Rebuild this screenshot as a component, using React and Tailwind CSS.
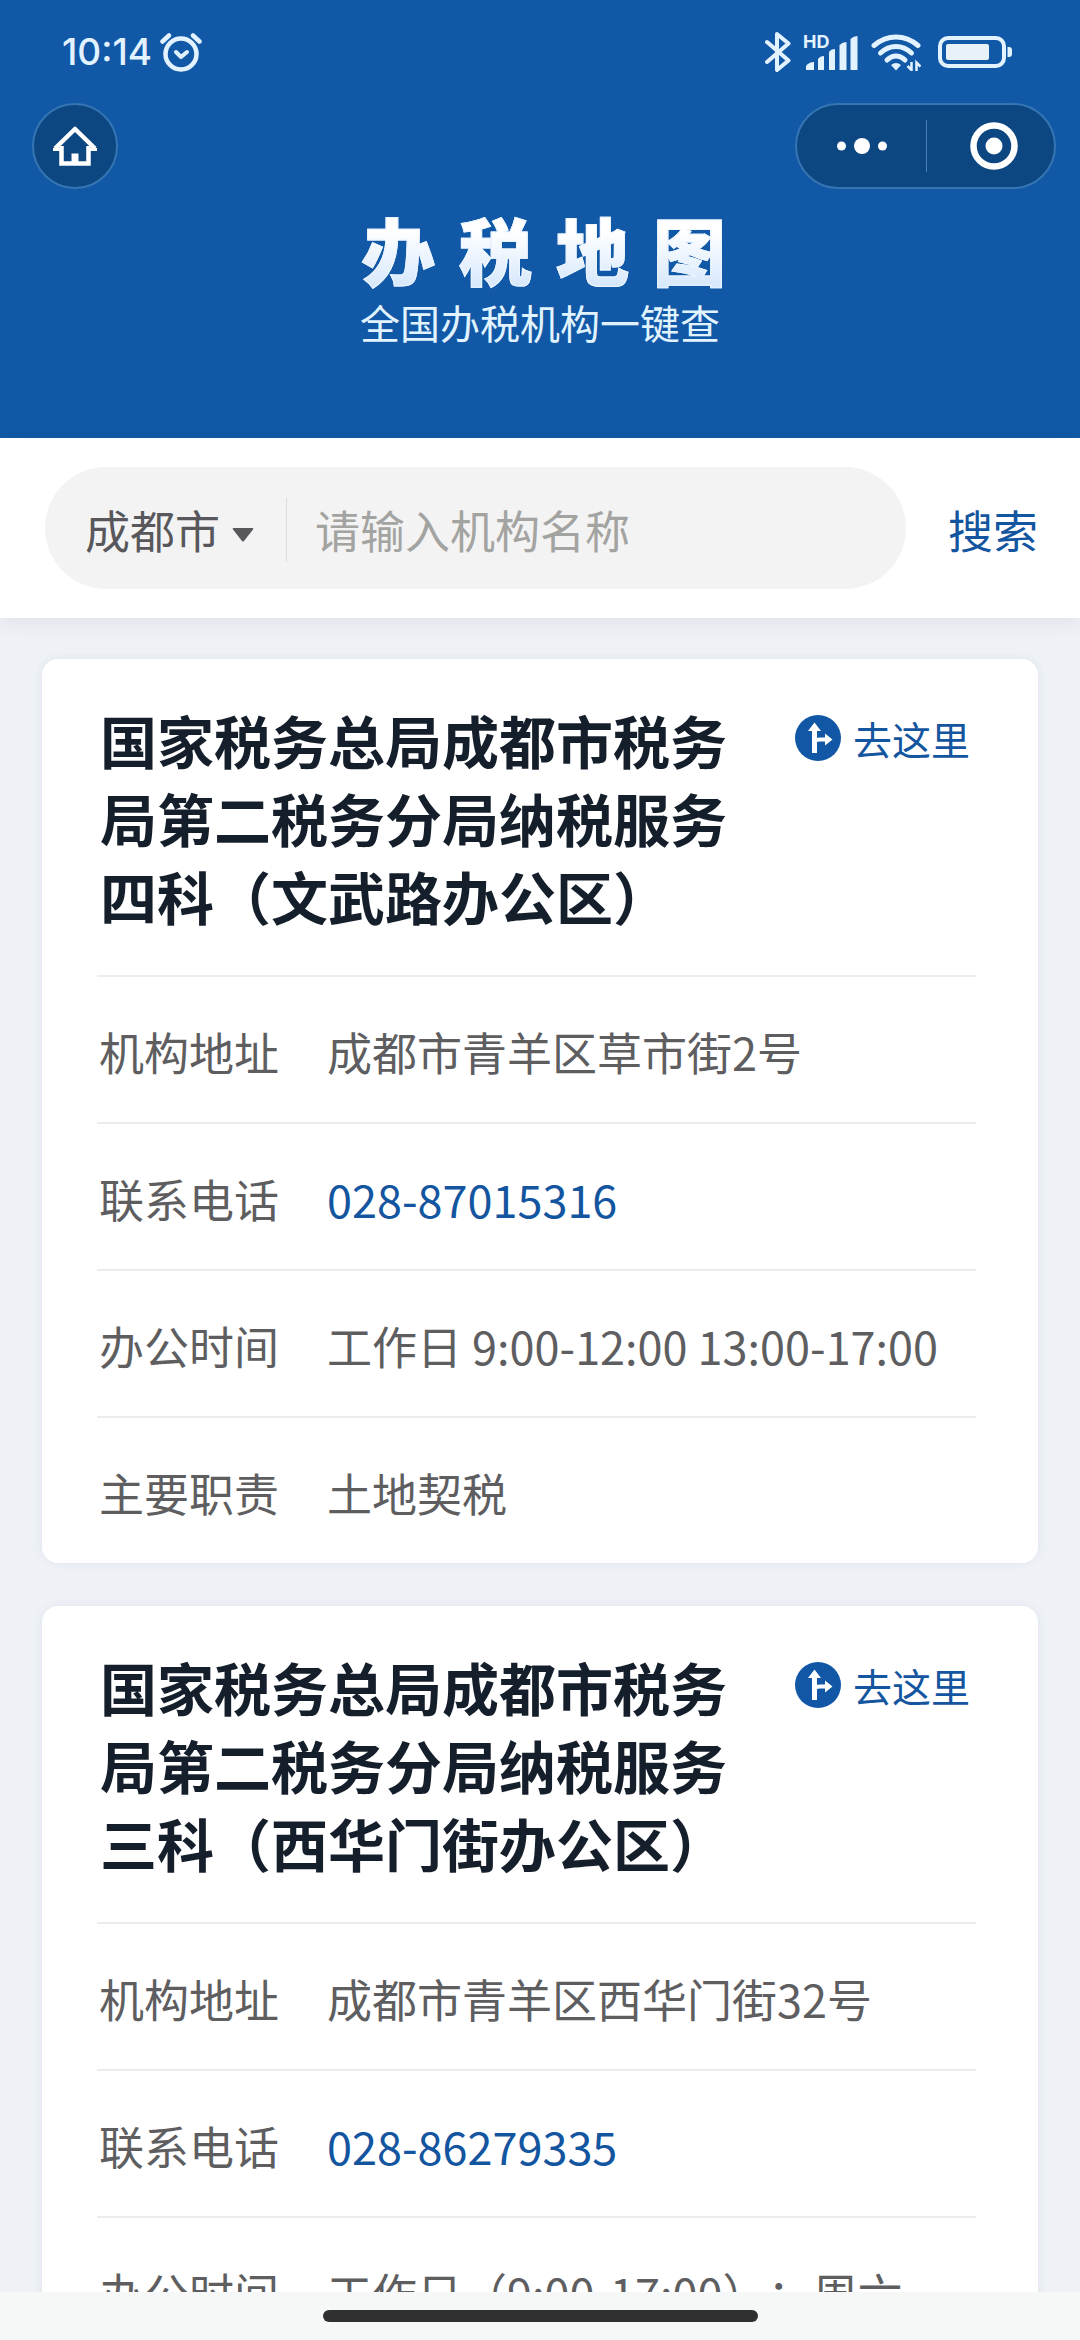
import React from 'react';

const offices = [
  {
    id: 'wenwu',
    name: '国家税务总局成都市税务局第二税务分局纳税服务四科（文武路办公区）',
    address: '成都市青羊区草市街2号',
    phone: '028-87015316',
    hours: '工作日 9:00-12:00 13:00-17:00',
    duty: '土地契税',
  },
  {
    id: 'xihuamen',
    name: '国家税务总局成都市税务局第二税务分局纳税服务三科（西华门街办公区）',
    address: '成都市青羊区西华门街32号',
    phone: '028-86279335',
    hours: '工作日（9:00-17:00）；周六',
    duty: '土地契税',
  },
];

function StatusBar() {
  return (
    <div className="flex h-[103px] items-center justify-between pl-[62px] pr-[68px] text-[#e3f2ff]">
      <div className="flex items-center gap-2">
        <span className="font-['Inter',sans-serif] text-[37px] leading-10 font-medium">10:14</span>
        {/* Alarm */}
        <svg viewBox="0 0 42 40" className="h-10 w-[42px]" fill="none" stroke="currentColor" strokeLinecap="round">
          <circle cx="21" cy="22" r="15.5" strokeWidth="4.5" />
          <path d="M2.5 9.5 9 3.5M39.5 9.5 33 3.5" strokeWidth="4.5" />
          <path d="M16 20l5 5 6-5" strokeWidth="4" strokeLinejoin="round" />
        </svg>
      </div>

      <div className="flex items-center">
        {/* Bluetooth */}
        <svg viewBox="0 0 26 42" className="mr-3 h-[42px] w-[26px]" fill="none" stroke="currentColor" strokeWidth="4" strokeLinecap="round" strokeLinejoin="round">
          <path d="M2 11 23.5 29.5 12 39V3l11.5 9.5L2 31" />
        </svg>
        {/* HD signal */}
        <svg viewBox="0 0 56 38" className="mr-3 h-[38px] w-14 overflow-visible" fill="currentColor">
          <text x="0" y="15" fontFamily="Inter, sans-serif" fontSize="18" fontWeight="700">HD</text>
          <path d="M3 37v-4q3-4 8-4v8z" />
          <path d="M15 37V26q2-3 6-3v14z" />
          <path d="M26 37V19q2-3 6-3v21z" />
          <path d="M36.500 37V12q3-3 7-3v28z" />
          <path d="M47.500 37V6q3-3 7-3v34z" />
        </svg>
        {/* Wifi */}
        <svg viewBox="0 0 50 38" className="mr-[17px] h-[38px] w-[50px]" fill="none" stroke="currentColor" strokeWidth="5" strokeLinecap="round">
          <path d="M3 12.500Q13 4 25 4t22 8.500" />
          <path d="M9.500 20q7-6.500 15.500-6.500T40.500 20" />
          <path d="M16 27q4-4 9-4t9 4" />
          <path d="M20 32q5-4 10 0l-5 5.500z" fill="currentColor" stroke="none" />
          <path d="M40.500 29v8l-4-4M45.500 38v-8.500l4 4" strokeWidth="2.500" strokeLinecap="butt" />
        </svg>
        {/* Battery */}
        <svg viewBox="0 0 74 32" className="h-8 w-[74px]" fill="currentColor">
          <rect x="2" y="2" width="64" height="28" rx="8" fill="none" stroke="currentColor" strokeWidth="4" />
          <rect x="8" y="8" width="43" height="16" rx="2" fill="#e9f1f8" />
          <path d="M69.500 11H71q3 0 3 3v4q0 3-3 3h-1.500z" />
        </svg>
      </div>
    </div>
  );
}

function NavBar() {
  return (
    <div className="flex items-center justify-between pl-8 pr-6">
      <button aria-label="首页" className="flex size-[86px] items-center justify-center rounded-full border-2 border-[#3575b3] bg-[#0d4782] text-white">
        <svg viewBox="0 0 44 40" className="h-10 w-11" fill="none" stroke="currentColor" strokeWidth="4.500">
          <path d="M2 22.500 22 3l20 19.500" strokeLinejoin="round" />
          <path d="M0 23.500h8M36 23.500h8" strokeWidth="3" />
          <path d="M8.500 20v17.500h27V20" />
          <path d="M18.500 39V27.500h7V39z" fill="currentColor" stroke="none" />
        </svg>
      </button>

      <div className="flex h-[86px] w-[261px] items-center rounded-full border-2 border-[#3575b3] bg-[#0d4782] text-white">
        <button aria-label="更多" className="flex h-full w-[129px] items-center justify-center">
          <svg viewBox="0 0 50 16" className="h-4 w-[50px]" fill="currentColor">
            <circle cx="4.500" cy="8" r="4.500" />
            <circle cx="25" cy="8" r="8" />
            <circle cx="45.500" cy="8" r="4.500" />
          </svg>
        </button>
        <span className="h-[52px] w-px bg-[#4a80b5]" />
        <button aria-label="关闭" className="flex h-full flex-1 items-center justify-center pl-1.5">
          <svg viewBox="0 0 48 48" className="size-12">
            <circle cx="24" cy="24" r="20.500" fill="none" stroke="currentColor" strokeWidth="6.500" />
            <circle cx="24" cy="24" r="8.500" fill="currentColor" />
          </svg>
        </button>
      </div>
    </div>
  );
}

function SearchBar() {
  return (
    <form
      onSubmit={(e) => e.preventDefault()}
      className="relative z-10 flex items-center bg-white py-[29px] pl-[45px] text-[45px] leading-[64px] shadow-[0_4px_20px_rgba(0,0,0,0.07)]"
    >
      <div className="flex h-[122px] min-w-0 flex-1 items-center rounded-full bg-[#f3f3f3] pt-1 pl-10">
        <div className="relative flex shrink-0 items-center">
          <select aria-label="城市" defaultValue="成都市" className="appearance-none bg-transparent pr-[33px] text-[#58585c] outline-none">
            <option>成都市</option>
          </select>
          <svg viewBox="0 0 22 14" className="pointer-events-none absolute right-0 top-[30px] h-3.5 w-[22px]" fill="#58585c">
            <path d="M1.500 0h19q1.500 0 .5 1.500l-9 11.500q-1 1-2 0L1 1.500Q0 0 1.500 0z" />
          </svg>
        </div>
        <span className="ml-8 h-16 w-px shrink-0 bg-[#dcdcdc]" />
        <input
          type="text"
          aria-label="机构名称"
          placeholder="请输入机构名称"
          className="ml-7 min-w-0 flex-1 bg-transparent text-[#58585c] outline-none placeholder:text-[#a3a3a1]"
        />
      </div>
      <button type="submit" className="w-[174px] shrink-0 pt-1 text-[#14559f]">搜索</button>
    </form>
  );
}

function Row({ label, children }) {
  return (
    <div className="flex border-t-2 border-[#ececee] pt-[43px] pb-[38px] pl-0.5">
      <dt className="w-[228px] shrink-0">{label}</dt>
      <dd className="min-w-0 flex-1">{children}</dd>
    </div>
  );
}

function OfficeCard({ office }) {
  return (
    <article className="rounded-2xl bg-white pl-[55px] pr-[62px] shadow-[0_0_10px_rgba(40,60,90,0.07)]">
      <div className="flex items-start justify-between pt-[41px] pb-[41px] pl-[3px] pr-1.5">
        <h2 className="w-[630px] text-[57px] leading-[78px] font-bold text-[#151f2b]">{office.name}</h2>
        <a href={`#${office.id}`} className="mt-2.5 flex shrink-0 items-center gap-3 text-[39px] leading-14 text-[#14559f]">
          <svg viewBox="0 0 46 46" className="size-[46px]">
            <circle cx="23" cy="23" r="23" fill="#1157a5" />
            <g fill="none" stroke="#fff" strokeWidth="4">
              <path d="M19.500 38V13" strokeWidth="5" />
              <path d="M20 26.500q1-2 5-2h7" />
            </g>
            <path d="M19.500 7.500 26 16H13zM37.500 24.500 30 18.500v12z" fill="#fff" />
          </svg>
          去这里
        </a>
      </div>

      <dl className="text-[45px] leading-[64px] text-[#5e5e61] [text-spacing-trim:space-all]">
        <Row label="机构地址">{office.address}</Row>
        <Row label="联系电话">
          <a href={`tel:${office.phone}`} className="text-[#14559f]">{office.phone}</a>
        </Row>
        <Row label="办公时间">{office.hours}</Row>
        <Row label="主要职责">{office.duty}</Row>
      </dl>
    </article>
  );
}

export default function App() {
  return (
    <div className="flex h-screen flex-col bg-[#eef2f7] font-['Noto_Sans_CJK_SC',sans-serif]">
      <header className="bg-[#1159a6] pb-24">
        <StatusBar />
        <NavBar />
        <div className="mt-4 text-center">
          <h1 className="flex justify-center gap-6 bg-linear-to-b from-white from-30% to-[#d3e6fc] bg-clip-text pl-2 text-[73px] leading-[86px] font-black text-transparent [-webkit-text-stroke:1px_#edf5ff]">
            {[...'办税地图'].map((char) => (
              <span key={char}>{char}</span>
            ))}
          </h1>
          <p className="mt-[11px] text-[40px] leading-10 text-[#e0f3ff]">全国办税机构一键查</p>
        </div>
      </header>

      <SearchBar />

      <main className="flex min-h-0 flex-1 flex-col gap-[43px] overflow-y-auto px-[42px] pt-[41px] [scrollbar-width:none]">
        {offices.map((office) => (
          <OfficeCard key={office.id} office={office} />
        ))}
      </main>

      {/* Home indicator */}
      <div className="flex h-12 shrink-0 items-start justify-center bg-[#f6f7f7] pt-[18px]">
        <span className="h-3 w-[435px] rounded-full bg-[#303030]" />
      </div>
    </div>
  );
}
